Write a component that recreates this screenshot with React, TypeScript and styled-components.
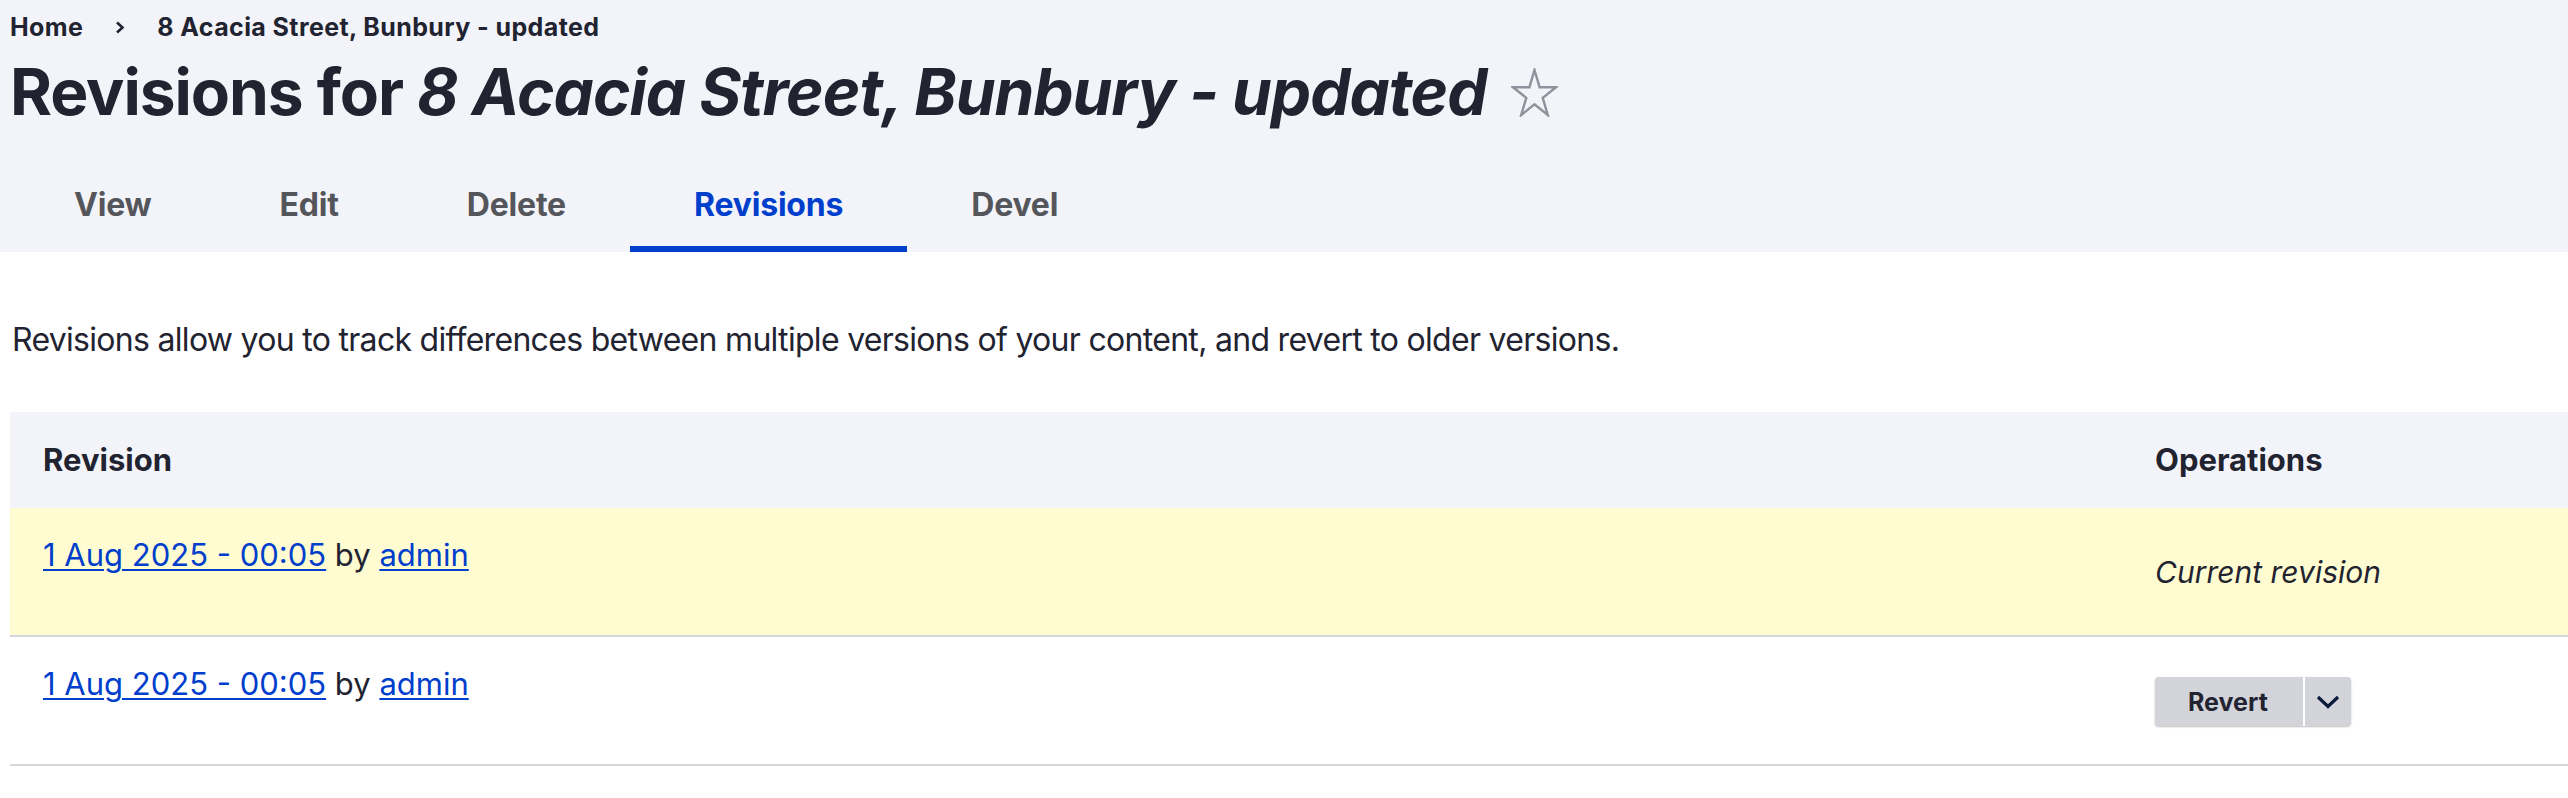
import React from "react";
import styled, { createGlobalStyle } from "styled-components";

const GlobalStyle = createGlobalStyle`
  html, body {
    margin: 0;
    padding: 0;
    background: #ffffff;
  }
  body {
    font-family: Inter, "Noto Sans", "Liberation Sans", sans-serif;
    color: #222330;
    -webkit-font-smoothing: antialiased;
  }
`;

const Header = styled.header`
  background: #f3f4f9;
  padding-left: 10px;
`;

const Breadcrumb = styled.nav`
  display: flex;
  align-items: center;
  gap: 32px;
  height: 54px;
  font-size: 25px;
  font-weight: 700;
  line-height: 54px;
  letter-spacing: 0.4px;
  color: #222330;
`;

const Crumb = styled.a`
  color: inherit;
  text-decoration: none;
`;

const Title = styled.h1`
  display: flex;
  align-items: center;
  gap: 24px;
  margin: 0;
  font-size: 64px;
  line-height: 76px;
  font-weight: 700;
  letter-spacing: -1.05px;
  color: #222330;

  em {
    font-style: italic;
  }
`;

const Tabs = styled.ul`
  display: flex;
  margin: 26px 0 0;
  padding: 0;
  list-style: none;
  height: 96px;
`;

const Tab = styled.li<{ $active?: boolean }>`
  display: flex;
  align-items: center;
  padding: 0 64px;
  font-size: 32px;
  font-weight: 700;
  letter-spacing: -0.2px;
  color: ${(p) => (p.$active ? "#003ecc" : "#55565b")};
  box-shadow: ${(p) => (p.$active ? "inset 0 -6px 0 #003ecc" : "none")};
  cursor: pointer;
`;

const Main = styled.main`
  padding: 64px 0 0 10px;
`;

const Description = styled.p`
  margin: 0 0 48px 2px;
  font-size: 32px;
  line-height: 48px;
  letter-spacing: -0.7px;
`;

const Table = styled.table`
  width: 100%;
  border-collapse: separate;
  border-spacing: 0;
`;

const HeadCell = styled.th<{ $ops?: boolean }>`
  background: #f3f4f9;
  padding: 24px 33px;
  text-align: left;
  font-size: 31px;
  font-weight: 700;
  line-height: 48px;
  width: ${(p) => (p.$ops ? "380px" : "auto")};
`;

const Row = styled.tr<{ $current?: boolean }>`
  background: ${(p) => (p.$current ? "#fffcd1" : "#ffffff")};
`;

const Cell = styled.td<{ $ops?: boolean }>`
  padding: ${(p) => (p.$ops ? "0 33px" : "23px 33px 56px")};
  border-bottom: 2px solid #d6d7dc;
  font-size: 31px;
  line-height: 48px;
  vertical-align: ${(p) => (p.$ops ? "middle" : "top")};
`;

const Link = styled.a`
  color: #003ecc;
  text-decoration: underline;
  text-decoration-thickness: 2px;
  text-underline-offset: 3px;
`;

const Current = styled.em`
  font-style: italic;
  font-size: 30px;
`;

const DropButton = styled.div`
  display: inline-flex;
  align-items: stretch;
  height: 49px;
  margin-top: 2px;
  border-radius: 4px;
  background: #d3d4d9;
  box-shadow: 0 1px 2px rgba(0, 0, 0, 0.25);
  overflow: hidden;
`;

const DropAction = styled.button`
  border: 0;
  background: transparent;
  padding: 0 35px 0 33px;
  font-family: inherit;
  font-size: 25px;
  font-weight: 700;
  color: #222330;
`;

const DropToggle = styled.button`
  display: flex;
  align-items: center;
  justify-content: center;
  width: 48px;
  border: 0;
  border-left: 2px solid #ffffff;
  background: transparent;
  padding: 0;
`;

function starPoints(w: number, h: number) {
  const pts: string[] = [];
  const R = 1;
  const r = 0.382;
  for (let i = 0; i < 10; i++) {
    const a = (Math.PI / 5) * i;
    const rad = i % 2 === 0 ? R : r;
    const x = Math.sin(a) * rad;
    const y = -Math.cos(a) * rad;
    // normalise to box: x in [-0.951, 0.951], y in [-1, 0.809]
    const px = ((x + 0.951) / 1.902) * (w - 4) + 2;
    const py = ((y + 1) / 1.809) * (h - 4) + 2;
    pts.push(`${px.toFixed(2)},${py.toFixed(2)}`);
  }
  return pts.join(" ");
}

const Star = () => (
  <svg width="47" height="49" viewBox="0 0 47 49" aria-hidden="true">
    <polygon
      points={starPoints(47, 49)}
      fill="none"
      stroke="#8e929c"
      strokeWidth="2.4"
      strokeLinejoin="miter"
    />
  </svg>
);

const Chevron = () => (
  <svg width="10" height="13" viewBox="0 0 10 13" aria-hidden="true">
    <polyline points="2,1.5 7.5,6.5 2,11.5" fill="none" stroke="#222330" strokeWidth="2.6" />
  </svg>
);

const ChevronDown = () => (
  <svg width="24" height="14" viewBox="0 0 24 14" aria-hidden="true">
    <polyline points="2,2 12,11.5 22,2" fill="none" stroke="#0b1a3a" strokeWidth="3.2" />
  </svg>
);

const revisions = [
  { date: "1 Aug 2025 - 00:05", user: "admin", current: true },
  { date: "1 Aug 2025 - 00:05", user: "admin", current: false },
];

export default function App() {
  return (
    <>
      <GlobalStyle />
      <Header>
        <Breadcrumb>
          <Crumb href="#">Home</Crumb>
          <Chevron />
          <Crumb href="#">8 Acacia Street, Bunbury - updated</Crumb>
        </Breadcrumb>
        <Title>
          <span>
            Revisions for <em>8 Acacia Street, Bunbury - updated</em>
          </span>
          <Star />
        </Title>
        <Tabs>
          <Tab>View</Tab>
          <Tab>Edit</Tab>
          <Tab>Delete</Tab>
          <Tab $active>Revisions</Tab>
          <Tab>Devel</Tab>
        </Tabs>
      </Header>
      <Main>
        <Description>
          Revisions allow you to track differences between multiple versions of your content, and
          revert to older versions.
        </Description>
        <Table>
          <thead>
            <tr>
              <HeadCell>Revision</HeadCell>
              <HeadCell $ops>Operations</HeadCell>
            </tr>
          </thead>
          <tbody>
            {revisions.map((rev, i) => (
              <Row key={i} $current={rev.current}>
                <Cell>
                  <Link href="#">{rev.date}</Link> by <Link href="#">{rev.user}</Link>
                </Cell>
                <Cell $ops>
                  {rev.current ? (
                    <Current>Current revision</Current>
                  ) : (
                    <DropButton>
                      <DropAction>Revert</DropAction>
                      <DropToggle aria-label="List additional actions">
                        <ChevronDown />
                      </DropToggle>
                    </DropButton>
                  )}
                </Cell>
              </Row>
            ))}
          </tbody>
        </Table>
      </Main>
    </>
  );
}
